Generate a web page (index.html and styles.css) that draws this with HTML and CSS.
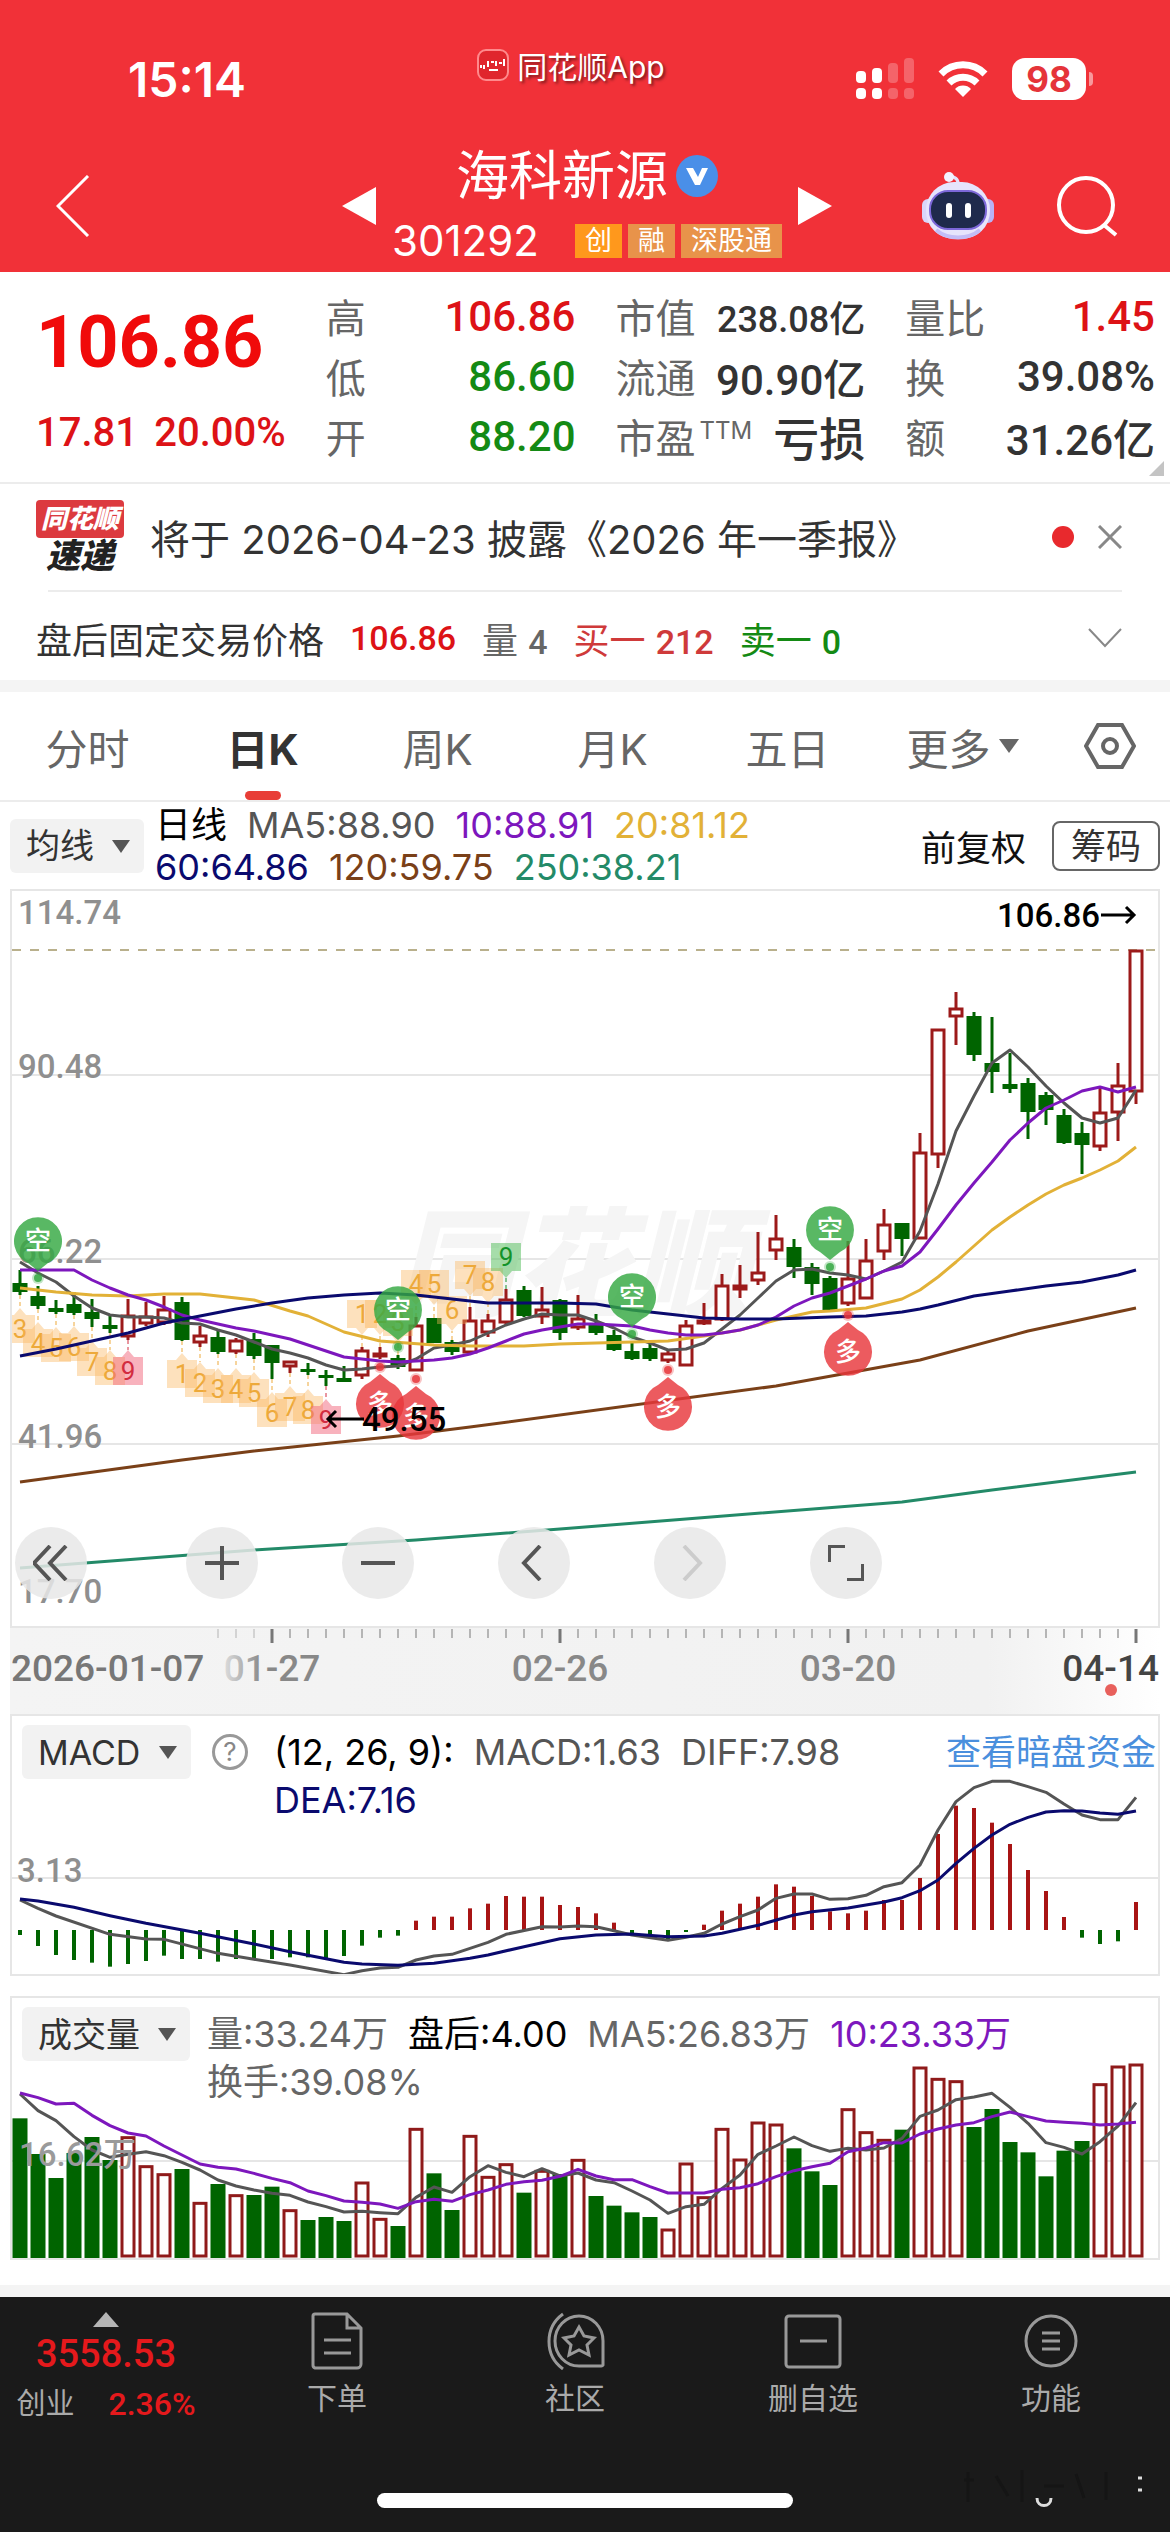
FILE: index.html
```html
<!DOCTYPE html>
<html lang="zh-CN">
<head>
    <meta charset="UTF-8">
    <meta name="viewport" content="width=device-width, initial-scale=1.0">
    <title>海科新源 301292</title>
    <link rel="stylesheet" href="styles.css">
</head>
<body>
    <header class="header">
        <div class="status-bar">
            <span class="time">15:14</span>
            <span class="app-name">
                <svg width="32" height="32" viewBox="0 0 32 32">
                    <rect x="1" y="1" width="30" height="30" rx="8" fill="#e0262d" stroke="#ff8a8c" stroke-width="2"/>
                    <path d="M4 19v-3M7 20v-4M11 18v-6M14 13h3M19 17v-5M22 14h3M27 17v-7M12 21h9" stroke="#fff" stroke-width="2" fill="none"/>
                </svg>
                同花顺App
            </span>
            <span class="status-icons">
                <svg width="58" height="42" viewBox="0 0 58 42" fill="#fff">
                    <rect x="0" y="13" width="10" height="12" rx="4"/>
                    <rect x="16" y="10" width="10" height="15" rx="4"/>
                    <rect x="32" y="5" width="10" height="20" rx="4" opacity=".25"/>
                    <rect x="48" y="0" width="10" height="25" rx="4" opacity=".25"/>
                    <rect x="0" y="30" width="10" height="11" rx="4"/>
                    <rect x="16" y="30" width="10" height="11" rx="4"/>
                    <rect x="32" y="30" width="10" height="11" rx="4" opacity=".25"/>
                    <rect x="48" y="30" width="10" height="11" rx="4" opacity=".25"/>
                </svg>
                <svg width="50" height="38" viewBox="0 0 50 38" fill="none" stroke="#fff" stroke-width="7">
                    <path d="M3 14a31 31 0 0 1 44 0"/>
                    <path d="M11 23a20 20 0 0 1 28 0"/>
                    <path d="M25 37l-8-8a11 11 0 0 1 16 0z" fill="#fff" stroke="none"/>
                </svg>
                <span class="battery">98</span>
            </span>
        </div>
        <nav class="title-bar">
            <button class="icon-btn" aria-label="返回">
                <svg width="34" height="62" viewBox="0 0 34 62" fill="none" stroke="#fff" stroke-width="3"><path d="M32 1L2 31l30 30"/></svg>
            </button>
            <div class="stock">
                <button class="icon-btn" aria-label="上一只">
                    <svg width="34" height="38" viewBox="0 0 34 38" fill="#fff"><path d="M34 0v38L0 19z"/></svg>
                </button>
                <div class="stock-info">
                    <h1 class="stock-name">海科新源
                        <svg width="42" height="42" viewBox="0 0 42 42"><circle cx="21" cy="21" r="21" fill="#4a8fe8"/><path d="M10 13h7l5 9 4-9h6l-8 17h-5z" fill="#fff"/></svg>
                    </h1>
                    <div class="stock-code">
                        <span class="code">301292</span>
                        <span class="tag tag-main">创</span>
                        <span class="tag">融</span>
                        <span class="tag">深股通</span>
                    </div>
                </div>
                <button class="icon-btn" aria-label="下一只">
                    <svg width="34" height="38" viewBox="0 0 34 38" fill="#fff"><path d="M0 0v38l34-19z"/></svg>
                </button>
            </div>
            <div class="title-actions">
                <button class="icon-btn" aria-label="智能助手">
                    <svg width="72" height="68" viewBox="0 0 72 68">
                        <path d="M36 14c1-6-2-9-8-10" fill="none" stroke="#e4e2fb" stroke-width="3"/>
                        <circle cx="27" cy="5" r="5" fill="#f3f2ff"/>
                        <rect x="0" y="27" width="12" height="24" rx="6" fill="#d9d6fa"/>
                        <rect x="60" y="27" width="12" height="24" rx="6" fill="#b9b3f5"/>
                        <rect x="4" y="10" width="64" height="57" rx="28" fill="#e6e4fc"/>
                        <path d="M14 58c12 10 32 10 44 0" fill="none" stroke="#c3bdf6" stroke-width="4"/>
                        <rect x="8" y="19" width="56" height="38" rx="18" fill="#1f2a4c" stroke="#7d68d8" stroke-width="2"/>
                        <rect x="24" y="31" width="6" height="15" rx="3" fill="#fff"/>
                        <rect x="43" y="31" width="6" height="15" rx="3" fill="#fff"/>
                    </svg>
                </button>
                <button class="icon-btn" aria-label="搜索">
                    <svg width="62" height="62" viewBox="0 0 62 62" fill="none" stroke="#fff" stroke-width="4"><circle cx="30" cy="30" r="27"/><path d="M48 50l12 10"/></svg>
                </button>
            </div>
        </nav>
    </header>

    <section class="quote">
        <div class="price-block up">
            <div class="price">106.86</div>
            <div class="change"><span>17.81</span><span>20.00%</span></div>
        </div>
        <dl class="stats">
            <div><dt>高</dt><dd class="up">106.86</dd></div>
            <div><dt>低</dt><dd class="down">86.60</dd></div>
            <div><dt>开</dt><dd class="down">88.20</dd></div>
        </dl>
        <dl class="stats">
            <div><dt>市值</dt><dd class="small">238.08亿</dd></div>
            <div><dt>流通</dt><dd>90.90亿</dd></div>
            <div><dt>市盈<sup>TTM</sup></dt><dd class="loss">亏损</dd></div>
        </dl>
        <dl class="stats">
            <div><dt>量比</dt><dd class="up">1.45</dd></div>
            <div><dt>换</dt><dd>39.08%</dd></div>
            <div><dt>额</dt><dd>31.26亿</dd></div>
        </dl>
        <svg class="corner" width="15" height="15" viewBox="0 0 15 15" fill="#c4c4c4"><path d="M15 0v15H0z"/></svg>
    </section>

    <section class="notice">
        <div class="notice-logo">
            <span class="logo-top">同花顺</span>
            <span class="logo-bottom">速递</span>
        </div>
        <a class="notice-text" href="#">将于 2026-04-23 披露《2026 年一季报》</a>
        <span class="dot"></span>
        <button class="icon-btn" aria-label="关闭">
            <svg width="24" height="24" viewBox="0 0 24 24" stroke="#888" stroke-width="3"><path d="M1 1l22 22M23 1L1 23"/></svg>
        </button>
    </section>

    <section class="after-hours">
        <span>盘后固定交易价格</span>
        <span class="num up">106.86</span>
        <span class="muted">量 <b class="num">4</b></span>
        <span class="buy">买一 <b class="num">212</b></span>
        <span class="down">卖一 <b class="num">0</b></span>
        <button class="icon-btn expand" aria-label="展开">
            <svg width="34" height="20" viewBox="0 0 34 20" fill="none" stroke="#888" stroke-width="2"><path d="M1 1l16 17L33 1"/></svg>
        </button>
    </section>

    <nav class="tabs">
        <button>分时</button>
        <button class="active">日K</button>
        <button>周K</button>
        <button>月K</button>
        <button>五日</button>
        <button>更多<svg width="20" height="14" viewBox="0 0 20 14" fill="#666"><path d="M0 0h20L10 14z"/></svg></button>
        <button aria-label="设置">
            <svg width="52" height="46" viewBox="0 0 52 46" fill="none" stroke="#666" stroke-width="4"><path d="M14 2h24l12 21-12 21H14L2 23z"/><circle cx="26" cy="23" r="7"/></svg>
        </button>
    </nav>

    <section class="ma-row">
        <div class="picker">
            <select aria-label="主图指标"><option>均线</option></select>
            <svg width="18" height="13" viewBox="0 0 18 13" fill="#555"><path d="M0 0h18L9 13z"/></svg>
        </div>
        <div class="legend">
            <div><span class="black">日线</span><span class="ma5">MA5:88.90</span><span class="ma10">10:88.91</span><span class="ma20">20:81.12</span></div>
            <div><span class="ma60">60:64.86</span><span class="ma120">120:59.75</span><span class="ma250">250:38.21</span></div>
        </div>
        <span class="adjust">前复权</span>
        <button class="chips">筹码</button>
    </section>

    <section class="panel">
        <svg id="kline" class="chart" viewBox="12 891 1146 735"></svg>
        <div class="controls">
            <button class="first" aria-label="最早"><svg viewBox="0 0 36 36"><path d="M17 1L1 18l16 17M33 1L17 18l16 17"/></svg></button>
            <button aria-label="放大"><svg viewBox="0 0 36 36"><path d="M18 1v34M1 18h34"/></svg></button>
            <button aria-label="缩小"><svg viewBox="0 0 36 36"><path d="M1 18h34"/></svg></button>
            <button aria-label="向左"><svg viewBox="0 0 36 36"><path d="M24 1L8 18l16 17"/></svg></button>
            <button aria-label="向右" disabled><svg viewBox="0 0 36 36"><path d="M12 1l16 17-16 17"/></svg></button>
            <button aria-label="全屏"><svg viewBox="0 0 36 36"><path d="M1 17V1h16M35 19v16H19"/></svg></button>
        </div>
    </section>
    <svg id="axis" class="axis" viewBox="0 1628 1170 86"></svg>

    <section class="panel">
        <svg id="macd" class="chart" viewBox="12 1716 1146 258"></svg>
        <div class="panel-head">
            <div class="picker">
                <select aria-label="副图指标一"><option>MACD</option></select>
                <svg width="18" height="13" viewBox="0 0 18 13" fill="#555"><path d="M0 0h18L9 13z"/></svg>
            </div>
            <button class="icon-btn" aria-label="说明">
                <span class="help">?</span>
            </button>
            <div class="legend">
                <div><span class="black">(12, 26, 9):</span><span class="ma5">MACD:1.63</span><span class="ma5">DIFF:7.98</span></div>
                <div><span class="ma60">DEA:7.16</span></div>
            </div>
            <a class="fund-link" href="#">查看暗盘资金</a>
        </div>
    </section>

    <section class="panel volume">
        <svg id="volume" class="chart" viewBox="12 1998 1146 260"></svg>
        <div class="panel-head">
            <div class="picker">
                <select aria-label="副图指标二"><option>成交量</option></select>
                <svg width="18" height="13" viewBox="0 0 18 13" fill="#555"><path d="M0 0h18L9 13z"/></svg>
            </div>
            <div class="legend">
                <div><span class="gray">量:33.24万</span><span class="black">盘后:4.00</span><span class="gray">MA5:26.83万</span><span class="ma10">10:23.33万</span></div>
                <div><span class="gray">换手:39.08%</span></div>
            </div>
        </div>
    </section>

    <footer class="footer">
        <nav class="bottom-nav">
            <a class="index" href="#">
                <svg width="26" height="15" viewBox="0 0 26 15" fill="#aaa"><path d="M13 0l13 15H0z"/></svg>
                <span class="index-value">3558.53</span>
                <span class="index-row"><span>创业</span><b>2.36%</b></span>
            </a>
            <a href="#">
                <svg width="52" height="58" viewBox="0 0 52 58"><path d="M4 2h32l14 14v36a4 4 0 0 1-4 4H4a3 3 0 0 1-2-3V4a2 2 0 0 1 2-2zM36 2v14h14M13 28h27M13 41h27"/></svg>
                <span>下单</span>
            </a>
            <a href="#">
                <svg width="60" height="58" viewBox="0 0 60 58"><path d="M18 2a34 34 0 0 0 0 55"/><path d="M58 53V29a24 25 0 1 0-24 25h22a2 2 0 0 0 2-1zM34 15l5 9 10 2-7 7 2 10-10-5-10 5 2-10-7-7 10-2z"/></svg>
                <span>社区</span>
            </a>
            <a href="#">
                <svg width="58" height="58" viewBox="0 0 58 58"><rect x="2" y="4" width="54" height="51" rx="3"/><path d="M16 29h27"/></svg>
                <span>删自选</span>
            </a>
            <a href="#">
                <svg width="54" height="58" viewBox="0 0 54 58"><circle cx="27" cy="29" r="25"/><path d="M18 21h18M18 29h18M18 37h18"/></svg>
                <span>功能</span>
            </a>
        </nav>
        <div class="home-bar"></div>
        <svg class="stamp" width="200" height="50" viewBox="0 0 200 50" fill="none" stroke-width="3">
            <path d="M8 18h10M12 10v30M40 14l12 20M66 8v32M88 24h20M120 12l8 24M150 10v28" stroke="#151515"/>
            <path d="M81 36c0 10 14 10 14 0M182 16h4M182 28h4" stroke="#ddd"/>
        </svg>
    </footer>

    <script src="charts.js"></script>
</body>
</html>
```

FILE: styles.css
```css
* {
    box-sizing: border-box;
}
body {
    margin: 0;
    background: #fff;
    color: #333;
    font-family: Inter, "Noto Sans CJK SC", sans-serif;
    font-size: 34px;
}
button {
    padding: 0;
    border: none;
    background: none;
    font: inherit;
    color: inherit;
    cursor: pointer;
}
svg {
    display: block;
}
a {
    color: inherit;
    text-decoration: none;
}
dl, dd, h1 {
    margin: 0;
}
.icon-btn {
    flex: none;
}
.num, .price-block, dd, .index-value, .index-row b {
    font-family: Roboto, "Noto Sans CJK SC", sans-serif;
    font-weight: 500;
}
.up {
    color: #dd1216;
}
.down {
    color: #148a14;
}

/* header */
.header {
    height: 272px;
    background: #f13138;
    color: #fff;
}
.status-bar {
    display: grid;
    grid-template-columns: 1fr auto 1fr;
    align-items: center;
    height: 140px;
    padding: 18px 76px 0 48px;
}
.time {
    padding-left: 80px;
    font-size: 48px;
    font-weight: 600;
}
.app-name {
    display: flex;
    align-items: center;
    gap: 8px;
    margin-bottom: 28px;
    font-size: 30px;
    text-shadow: 2px 2px 3px rgba(0, 0, 0, .5);
}
.status-icons {
    display: flex;
    justify-content: flex-end;
    align-items: center;
    gap: 24px;
}
.battery {
    position: relative;
    width: 74px;
    border-radius: 13px;
    margin-right: 8px;
    background: #fff;
    color: #e5343a;
    font-size: 35px;
    font-weight: 700;
    line-height: 42px;
    text-align: center;
}
.battery::after {
    content: "";
    position: absolute;
    top: 14px;
    right: -7px;
    width: 4px;
    height: 14px;
    border-radius: 0 4px 4px 0;
    background: rgba(255, 255, 255, .5);
}
.title-bar {
    display: grid;
    grid-template-columns: 1fr auto 1fr;
    align-items: center;
    height: 132px;
    padding: 0 52px 0 56px;
}
.title-bar > .icon-btn {
    justify-self: start;
}
.stock {
    display: flex;
    align-items: center;
    gap: 16px;
}
.stock-info {
    display: flex;
    flex-direction: column;
    align-items: center;
}
.stock-name {
    display: flex;
    align-items: center;
    gap: 8px;
    font-size: 53px;
    font-weight: 400;
    line-height: 70px;
}
.stock-code {
    display: flex;
    align-items: center;
    gap: 6px;
    line-height: 60px;
}
.code {
    margin-right: 30px;
    font-size: 42px;
}
.tag {
    padding: 0 10px;
    background: #e8934a;
    font-size: 27px;
    line-height: 34px;
}
.tag-main {
    background: #ff981c;
}
.title-actions {
    display: flex;
    justify-content: flex-end;
    align-items: center;
    gap: 62px;
}

/* quote */
.quote {
    position: relative;
    display: grid;
    grid-template-columns: repeat(4, 1fr);
    gap: 40px;
    padding: 14px 15px 16px 36px;
    border-bottom: 2px solid #ececec;
}
.price {
    font-size: 72px;
    font-weight: 700;
    line-height: 114px;
    color: #f00a0a;
}
.change {
    display: flex;
    justify-content: space-between;
    font-size: 40px;
    line-height: 66px;
}
.stats > div {
    display: flex;
    justify-content: space-between;
    align-items: center;
    height: 60px;
    white-space: nowrap;
}
dt {
    font-size: 40px;
    color: #666;
}
dt sup {
    margin-left: 4px;
    font-size: 24px;
    line-height: 0;
}
dd {
    font-size: 42px;
}
dd.small {
    font-size: 36px;
}
dd.loss {
    font-size: 46px;
}
.corner {
    position: absolute;
    right: 6px;
    bottom: 6px;
}

/* notice */
.notice {
    display: flex;
    align-items: center;
    height: 108px;
    margin: 0 48px;
    border-bottom: 2px solid #ececec;
}
.notice-logo {
    display: flex;
    flex-direction: column;
    align-items: center;
    margin: 0 26px 0 -12px;
    font-style: italic;
    font-weight: 900;
}
.logo-top {
    padding: 0 5px;
    border-radius: 4px;
    background: #dc3a3f;
    color: #fff;
    font-size: 26px;
    line-height: 38px;
}
.logo-bottom {
    color: #222;
    font-size: 34px;
    line-height: 36px;
}
.notice-text {
    flex: 1;
    font-size: 40px;
    white-space: nowrap;
}
.dot {
    width: 22px;
    height: 22px;
    margin-right: 24px;
    border-radius: 50%;
    background: #e8292d;
}
.after-hours {
    display: flex;
    align-items: center;
    gap: 26px;
    height: 100px;
    padding: 4px 48px 0 36px;
    border-bottom: 12px solid #f4f4f4;
    font-size: 36px;
    white-space: nowrap;
}
.after-hours .num {
    font-size: 34px;
}
.muted {
    color: #666;
}
.buy {
    color: #cf3a3a;
}
.expand {
    margin-left: auto;
}

/* tabs */
.tabs {
    display: grid;
    grid-template-columns: repeat(6, 175fr) 120fr;
    height: 110px;
    border-bottom: 2px solid #ececec;
    color: #666;
    font-size: 42px;
}
.tabs button {
    position: relative;
    display: flex;
    justify-content: center;
    align-items: center;
    gap: 8px;
}
.tabs .active {
    color: #333;
    font-weight: 700;
}
.tabs .active::after {
    content: "";
    position: absolute;
    bottom: 0;
    width: 36px;
    height: 9px;
    border-radius: 5px;
    background: #e83e37;
}

/* indicators */
.ma-row {
    display: flex;
    align-items: center;
    height: 87px;
    padding: 0 10px;
    white-space: nowrap;
}
.picker {
    position: relative;
    flex: none;
}
.picker select {
    height: 54px;
    padding: 0 50px 0 16px;
    border: none;
    border-radius: 6px;
    background: #f2f2f2;
    color: #333;
    font: inherit;
    appearance: none;
}
.picker svg {
    position: absolute;
    top: 21px;
    right: 14px;
    pointer-events: none;
}
.legend {
    font-size: 36px;
}
.legend div {
    display: flex;
    gap: 20px;
    white-space: nowrap;
}
.ma-row .legend {
    margin-left: 11px;
    line-height: 42px;
}
.adjust {
    margin: 0 26px 0 auto;
    color: #111;
    font-size: 35px;
}
.chips {
    height: 50px;
    padding: 0 17px;
    border: 2px solid #666;
    border-radius: 8px;
    font-size: 35px;
    line-height: 46px;
}
.black { color: #000; }
.gray { color: #666; }
.ma5 { color: #555; }
.ma10 { color: #7d17bd; }
.ma20 { color: #e2b137; }
.ma60 { color: #0a0a6e; }
.ma120 { color: #7a4018; }
.ma250 { color: #238a68; }

/* charts */
.panel {
    position: relative;
    margin: 0 10px;
    border: 2px solid #e6e6e6;
}
.volume {
    margin-top: 20px;
    margin-bottom: 25px;
}
.chart, .axis {
    width: 100%;
    height: auto;
}
.chart text, .axis text {
    font-family: Roboto, "Noto Sans CJK SC", sans-serif;
}
.panel-head {
    position: absolute;
    top: 9px;
    left: 10px;
    right: 2px;
    display: flex;
    align-items: flex-start;
}
.panel-head .legend {
    margin-left: 17px;
    line-height: 48px;
    padding-top: 3px;
}
.help {
    display: block;
    width: 36px;
    height: 36px;
    margin: 9px 9px 0 21px;
    border: 3px solid #999;
    border-radius: 50%;
    color: #888;
    font-size: 26px;
    line-height: 30px;
}
.fund-link {
    margin-left: auto;
    padding-top: 3px;
    color: #4a8fdd;
    font-size: 35px;
    line-height: 48px;
}
.controls {
    position: absolute;
    left: 3px;
    bottom: 27px;
    display: flex;
    gap: 84px;
}
.controls button {
    display: flex;
    justify-content: center;
    align-items: center;
    width: 72px;
    height: 72px;
    border-radius: 50%;
    background: rgba(232, 232, 232, .85);
}
.controls .first {
    margin-right: 15px;
}
.controls svg {
    width: 36px;
    height: 36px;
    fill: none;
    stroke: #555;
    stroke-width: 4;
}
.controls button:disabled svg {
    stroke: #ccc;
}

/* footer */
.footer {
    position: relative;
    height: 247px;
    border-top: 12px solid #f4f4f4;
    background: #1a1a1a;
}
.bottom-nav {
    display: grid;
    grid-template-columns: 218fr repeat(4, 238fr);
    padding-top: 15px;
    color: #aaa;
    font-size: 30px;
}
.bottom-nav a {
    display: flex;
    flex-direction: column;
    align-items: center;
    gap: 8px;
    line-height: 40px;
}
.bottom-nav a > svg {
    fill: none;
    stroke: #999;
    stroke-width: 3;
}
.bottom-nav .index {
    gap: 4px;
    padding-right: 6px;
    line-height: 46px;
}
.bottom-nav .index > svg {
    fill: #b5b5b5;
    stroke: none;
}
.index-value {
    color: #e5191c;
    font-size: 38px;
}
.index-row {
    display: flex;
    gap: 34px;
    font-size: 29px;
}
.index-row b {
    color: #e5191c;
    font-size: 32px;
}
.home-bar {
    position: absolute;
    left: 50%;
    bottom: 24px;
    width: 416px;
    height: 15px;
    margin-left: -208px;
    border-radius: 8px;
    background: #fff;
}
.stamp {
    position: absolute;
    right: 14px;
    bottom: 20px;
}
```

FILE: charts.js
```js
const NS = 'http://www.w3.org/2000/svg';
const RED = '#9c1a1a';
const GREEN = '#006400';
const STEP = 18;

const px = i => 20 + i * STEP;

function add(parent, tag, attrs, text) {
    const el = document.createElementNS(NS, tag);
    for (const key in attrs) el.setAttribute(key, attrs[key]);
    if (text !== undefined) el.textContent = text;
    parent.appendChild(el);
    return el;
}

// points are [index, y]
function line(svg, points, color, width) {
    add(svg, 'polyline', {
        points: points.map(p => px(p[0]) + ',' + p[1]).join(' '),
        fill: 'none', stroke: color, 'stroke-width': width || 3, 'stroke-linejoin': 'round'
    });
}

const indexed = list => list.map((y, i) => [i, y]);

function grid(svg, y) {
    add(svg, 'path', { d: `M12 ${y}H1158`, stroke: '#e6e6e6', 'stroke-width': 2 });
}

function label(svg, x, y, text, attrs) {
    add(svg, 'text', Object.assign({ x, y, fill: '#8f8f8f', 'font-size': 33, 'font-weight': 500 }, attrs), text);
}

// candles: high, body top, body bottom, low, up?
const candles = [
    [1270,1283,1292,1295,0],[1286,1296,1306,1309,0],[1300,1308,1312,1314,0],[1292,1304,1313,1315,0],[1299,1312,1319,1327,0],
    [1315,1325,1329,1333,0],[1299,1315,1337,1340,1],[1302,1316,1324,1326,1],[1296,1309,1323,1325,1],[1297,1302,1340,1341,0],
    [1326,1335,1343,1347,1],[1331,1337,1352,1354,0],[1338,1340,1352,1354,1],[1333,1339,1356,1359,0],[1345,1345,1363,1379,0],
    [1361,1361,1367,1373,1],[1363,1369,1372,1375,0],[1370,1375,1378,1386,0],[1366,1378,1382,1382,0],[1347,1350,1376,1379,1],
    [1347,1353,1357,1359,1],[1355,1358,1367,1369,0],[1317,1325,1371,1371,1],[1318,1318,1343,1343,0],[1340,1342,1352,1355,0],
    [1307,1320,1353,1353,1],[1314,1320,1333,1337,1],[1289,1299,1323,1326,1],[1286,1290,1316,1317,0],[1287,1309,1317,1324,1],
    [1299,1300,1333,1340,0],[1295,1318,1328,1330,1],[1314,1325,1333,1335,0],[1330,1335,1350,1351,0],[1343,1351,1359,1360,0],
    [1343,1348,1359,1361,0],[1351,1353,1361,1363,1],[1320,1325,1366,1366,1],[1303,1320,1324,1325,1],[1274,1285,1320,1321,1],
    [1265,1285,1290,1298,1],[1232,1272,1281,1285,1],[1215,1238,1251,1260,1],[1239,1247,1267,1278,0],[1263,1267,1284,1295,0],
    [1276,1278,1310,1310,0],[1241,1278,1304,1306,1],[1239,1260,1299,1299,1],[1209,1224,1252,1260,1],[1223,1223,1239,1256,0],
    [1133,1152,1239,1239,1],[1029,1029,1155,1168,1],[992,1008,1017,1045,1],[1012,1016,1055,1061,0],[1017,1063,1072,1093,0],
    [1053,1084,1089,1093,0],[1078,1083,1112,1139,0],[1092,1095,1110,1125,0],[1109,1115,1143,1144,0],[1122,1133,1145,1174,0],
    [1087,1112,1147,1151,1],[1063,1085,1113,1141,1],[950,950,1092,1104,1]
];

const ma5 = [1262,1273,1282,1296,1308,1315,1317,1317,1318,1323,1324,1330,1335,1342,1349,1353,1358,1365,1370,1369,1367,
    1366,1359,1348,1345,1341,1333,1325,1319,1314,1315,1315,1321,1328,1337,1343,1350,1349,1343,1329,1315,1298,
    1281,1270,1269,1273,1275,1279,1271,1262,1231,1184,1131,1096,1063,1050,1067,1086,1103,1118,1123,1118,1090];
const ma10 = [1270,1270,1270,1270,1280,1288,1295,1300,1307,1315,1320,1324,1328,1331,1335,1339,1345,1351,1357,1359,1361,
    1362,1361,1360,1358,1354,1348,1341,1334,1330,1327,1324,1324,1325,1326,1330,1333,1335,1335,1333,1330,1325,
    1317,1306,1298,1293,1286,1279,1271,1266,1252,1229,1205,1183,1162,1140,1123,1108,1100,1091,1087,1092,1087];
const ma20 = [[0,1288],[2,1292],[4,1295],[6,1296],[8,1294],[10,1294],[11,1296],[13,1300],[15,1311],[16,1316],[18,1332],
    [20,1341],[23,1345],[25,1346],[28,1346],[30,1344],[34,1342],[36,1341],[38,1336],[40,1330],[42,1320],[44,1312],
    [45,1311],[47,1308],[49,1299],[50,1290],[51,1277],[52,1262],[53,1246],[54,1230],[55,1217],[56,1205],[57,1194],
    [58,1185],[59,1178],[60,1170],[61,1161],[62,1147]];
const ma60 = [[0,1356],[2,1349],[4,1341],[6,1333],[8,1323],[10,1316],[12,1309],[14,1303],[16,1298],[18,1295],[20,1293],
    [22,1295],[24,1299],[26,1303],[28,1303],[30,1303],[32,1304],[34,1310],[36,1314],[38,1318],[40,1319],[42,1319],
    [45,1317],[47,1316],[49,1312],[50,1309],[51,1305],[53,1296],[55,1291],[57,1286],[59,1282],[61,1275],[62,1270]];
const ma120 = [[0,1482],[9,1460],[13,1451],[21,1436],[25,1427],[42,1386],[50,1360],[56,1331],[62,1308]];
const ma250 = [[0,1568],[13,1550],[22,1540],[30,1529],[37,1519],[49,1502],[54,1490],[62,1472]];

// index, box centre, digit, side: 1 = under the candle, -1 = above
const counts = [
    [0,1329,3,1],[1,1343,4,1],[2,1348,5,1],[3,1347,6,1],[4,1362,7,1],[5,1371,8,1],[6,1371,9,1],
    [9,1374,1,1],[10,1383,2,1],[11,1389,3,1],[12,1389,4,1],[13,1393,5,1],[14,1413,6,1],[15,1407,7,1],[16,1410,8,1],[17,1420,9,1],
    [19,1314,1,-1],[20,1314,2,-1],[21,1322,3,-1],[22,1284,4,-1],[23,1284,5,-1],[24,1310,6,-1],[25,1275,7,-1],[26,1282,8,-1],[27,1257,9,-1]
];
const pins = [[1,1241,'空'],[21,1310,'空'],[34,1297,'空'],[45,1230,'空'],[20,1404,'多'],[22,1416,'多'],[36,1407,'多'],[46,1352,'多']];

function drawKline() {
    const svg = document.getElementById('kline');
    [1075, 1259, 1444].forEach(y => grid(svg, y));
    add(svg, 'text', { x: 396, y: 1307, fill: '#f5f5f5', 'font-size': 118, 'font-weight': 900, 'font-style': 'italic' }, '同花顺');
    add(svg, 'path', { d: 'M12 950H1158', stroke: '#b9b08c', 'stroke-width': 2, 'stroke-dasharray': '9 9' });

    candles.forEach(([high, top, bottom, low, up], i) => {
        const x = px(i);
        const color = up ? RED : GREEN;
        add(svg, 'path', { d: `M${x} ${high}V${top}M${x} ${bottom}V${low}`, stroke: color, 'stroke-width': 3 });
        if (up) {
            add(svg, 'rect', { x: x - 6, y: top + 1, width: 12, height: Math.max(bottom - top - 2, 2), fill: '#fff', stroke: color, 'stroke-width': 3 });
        } else {
            add(svg, 'rect', { x: x - 7.5, y: top, width: 15, height: bottom - top, fill: color });
        }
    });

    counts.forEach(([i, y, n, side]) => {
        const x = px(i);
        let fill = '#fbb55a', color = '#eda93a';
        if (n === 9) {
            fill = side > 0 ? '#f2667c' : '#4dbb55';
            color = side > 0 ? '#d22c40' : '#14932a';
        }
        const edge = side > 0 ? candles[i][3] : candles[i][0];
        add(svg, 'path', { d: `M${x} ${edge}V${y - side * 21}`, stroke: color, 'stroke-width': 1, 'stroke-dasharray': '4 3' });
        add(svg, 'path', {
            d: `M${x - 15} ${y - 14}h30v28h-30zM${x - 6} ${y - side * 14}h12L${x} ${y - side * 21}z`,
            fill, opacity: n === 9 ? .5 : .4
        });
        label(svg, x, y + 9, n, { fill: color, 'font-size': 26, 'font-weight': 400, 'text-anchor': 'middle' });
    });

    [[114.74, 924], [90.48, 1078], [66.22, 1263], [41.96, 1448]].forEach(([v, y]) => label(svg, 18, y, v.toFixed(2)));
    label(svg, 18, 1603, '17.70');

    line(svg, indexed(ma5), '#555');
    line(svg, ma20, '#e2b137');
    line(svg, indexed(ma10), '#7d17bd');
    line(svg, ma60, '#0a0a6e');
    line(svg, ma120, '#7a4018');
    line(svg, ma250, '#238a68');

    pins.forEach(([i, y, text]) => {
        const x = px(i);
        const side = text === '空' ? 1 : -1;
        const fill = side > 0 ? '#35a842' : '#e8373c';
        add(svg, 'circle', { cx: x, cy: y + side * 37, r: 6, fill, opacity: .3 });
        add(svg, 'circle', { cx: x, cy: y + side * 37, r: 4, fill, opacity: .85 });
        add(svg, 'path', {
            d: `M${x - 10} ${y + side * 22}A24 24 0 1 ${side > 0 ? 1 : 0} ${x + 10} ${y + side * 22}L${x} ${y + side * 30}z`,
            fill, opacity: .82
        });
        label(svg, x, y + 9, text, { fill: '#fff', 'font-size': 26, 'text-anchor': 'middle' });
    });

    add(svg, 'path', { d: 'M364 1419H328M336 1411l-8 8 8 8M1101 915h33M1126 907l8 8-8 8', fill: 'none', stroke: '#000', 'stroke-width': 3 });
    label(svg, 362, 1431, '49.55', { fill: '#000' });
    label(svg, 1100, 927, '106.86', { fill: '#000', 'text-anchor': 'end' });
}

function drawAxis() {
    const svg = document.getElementById('axis');
    const defs = add(svg, 'defs', {});
    const g = add(defs, 'linearGradient', { id: 'fade' });
    add(g, 'stop', { offset: '0', 'stop-color': '#f4f4f4' });
    add(g, 'stop', { offset: '.85', 'stop-color': '#f1f1f1' });
    add(g, 'stop', { offset: '1', 'stop-color': '#fff' });
    // first digit of the leftmost date fades out under the start date
    const t = add(defs, 'linearGradient', { id: 'fade-text' });
    add(t, 'stop', { offset: '0', 'stop-color': '#ddd' });
    add(t, 'stop', { offset: '.4', 'stop-color': '#888' });
    add(svg, 'rect', { x: 10, y: 1628, width: 1150, height: 86, fill: 'url(#fade)' });
    for (let i = 11; i <= 62; i++) {
        const major = (i - 14) % 16 === 0;
        add(svg, 'path', {
            d: `M${px(i)} 1629v${major ? 14 : 9}`,
            stroke: major ? '#777' : '#b5b5b5', 'stroke-width': major ? 3 : 2, opacity: i < 14 ? .5 : 1
        });
    }
    label(svg, 11, 1681, '2026-01-07', { fill: '#777', 'font-size': 37 });
    label(svg, 272, 1681, '01-27', { fill: 'url(#fade-text)', 'font-size': 37, 'text-anchor': 'middle' });
    label(svg, 560, 1681, '02-26', { fill: '#888', 'font-size': 37, 'text-anchor': 'middle' });
    label(svg, 848, 1681, '03-20', { fill: '#888', 'font-size': 37, 'text-anchor': 'middle' });
    label(svg, 1159, 1681, '04-14', { fill: '#444', 'font-size': 37, 'text-anchor': 'end' });
    add(svg, 'circle', { cx: 1111, cy: 1690, r: 6, fill: '#e8605c' });
}

// the sub charts store offsets in thirds of a pixel from the chart top
const macdY = v => 1700 + v / 3;
const volY = v => 1990 + v / 3;

const macdBars = [705,738,765,780,788,800,792,783,767,777,777,785,777,777,777,772,772,775,768,737,713,707,
    662,650,650,625,611,588,590,590,615,621,640,668,707,711,717,696,
    674,632,611,590,553,560,588,634,640,632,600,600,534,402,317,324,368,432,510,573,651,713,732,724,606];
const diff = [[0,600],[1,625],[2,648],[5,703],[7,717],[8,718],[11,760],[13,778],[15,795],[18,824],[19,812],[20,804],[21,802],
    [22,780],[23,768],[24,763],[26,727],[27,703],[29,680],[30,681],[31,678],[32,680],[33,692],[34,705],[36,721],[37,712],
    [38,700],[39,672],[40,650],[41,630],[42,595],[43,582],[44,582],[45,598],[46,596],[47,586],[48,560],[49,548],[50,495],
    [51,390],[52,305],[53,263],[54,244],[55,244],[56,260],[57,277],[58,312],[59,345],[60,359],[61,359],[62,292]];
const dea = [[0,597],[1,603],[3,622],[5,647],[7,670],[10,700],[13,732],[15,755],[18,787],[19,792],[21,796],[23,790],[25,775],
    [26,765],[28,740],[30,716],[32,705],[34,702],[36,710],[38,708],[39,700],[41,676],[43,645],[44,635],[46,624],[48,606],
    [49,593],[50,572],[51,540],[52,490],[53,445],[54,405],[55,373],[56,352],[57,336],[58,332],[59,333],[60,339],[61,343],[62,333]];

function drawMacd() {
    const svg = document.getElementById('macd');
    grid(svg, 1878);
    macdBars.forEach((v, i) => {
        const up = v < 690;
        add(svg, 'path', { d: `M${px(i)} 1930V${macdY(v)}`, stroke: up ? '#a81414' : GREEN, 'stroke-width': 4 });
    });
    line(svg, diff.map(([i, v]) => [i, macdY(v)]), '#555');
    line(svg, dea.map(([i, v]) => [i, macdY(v)]), '#0a0a6e');
    label(svg, 17, 1882, '3.13');
}

// negative = down day
const volumes = [-385,-492,-564,-489,-441,-510,440,527,551,-537,637,-582,614,-615,-590,659,-690,-681,-693,576,685,-708,
    415,-550,-660,436,559,521,-608,541,-552,508,-618,-647,-667,-681,717,519,620,415,507,396,402,-475,-544,-585,
    356,425,448,-419,231,265,272,-411,-357,-456,-487,-559,-482,-453,281,228,222];
const vol5 = [312,362,392,440,480,502,493,485,497,517,540,570,588,600,610,616,636,650,666,664,668,671,622,591,607,560,527,
    547,560,536,558,549,570,578,603,630,670,650,643,595,555,493,468,441,467,484,475,480,474,445,379,360,329,321,310,
    352,400,458,472,492,455,408,338];
const vol10 = [309,323,342,340,376,407,429,438,468,495,522,532,537,550,565,578,603,617,633,637,642,655,635,628,634,614,600,
    583,575,571,559,538,558,569,569,590,609,609,609,598,593,581,560,542,530,520,485,474,458,459,432,417,405,398,380,
    366,380,393,397,400,405,402,397];

function drawVolume() {
    const svg = document.getElementById('volume');
    grid(svg, 2161);
    volumes.forEach((v, i) => {
        const y = volY(Math.abs(v));
        if (v > 0) {
            add(svg, 'rect', { x: px(i) - 6, y: y + 1, width: 12, height: 2255 - y, fill: '#fff', stroke: '#8f1a1a', 'stroke-width': 3 });
        } else {
            add(svg, 'rect', { x: px(i) - 7.5, y, width: 15, height: 2258 - y, fill: GREEN });
        }
    });
    line(svg, indexed(vol5.map(volY)), '#555');
    line(svg, indexed(vol10.map(volY)), '#7d17bd');
    label(svg, 19, 2166, '16.62万', { fill: '#9a9a9a' });
}

drawKline();
drawAxis();
drawMacd();
drawVolume();
```
